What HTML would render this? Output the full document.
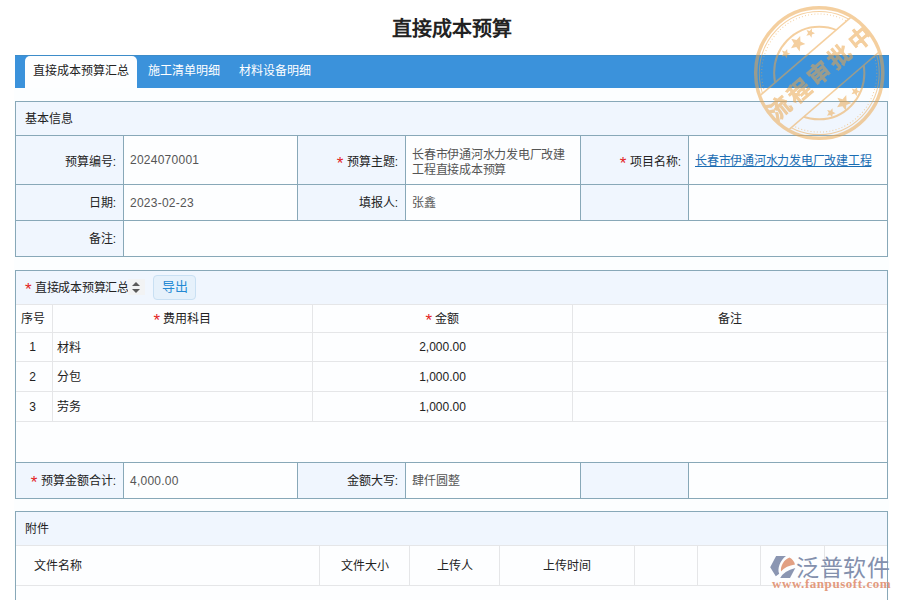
<!DOCTYPE html>
<html lang="zh-CN">
<head>
<meta charset="utf-8">
<title>直接成本预算</title>
<style>
*{box-sizing:border-box;margin:0;padding:0}
html,body{width:900px;height:600px;overflow:hidden;background:#fff}
body{position:relative;font-family:"Liberation Sans",sans-serif;font-size:12px;color:#222}
.title{position:absolute;left:15px;top:0;width:873px;height:55px;line-height:58px;text-align:center;font-size:20px;font-weight:bold;color:#222;white-space:nowrap}
.tabs{position:absolute;left:15px;top:55px;width:874px;height:33px;background:#3b92db;border-top:1px solid #3d8cc9;padding-left:10px;white-space:nowrap;overflow:hidden}
.tab{display:inline-block;vertical-align:top;height:32px;line-height:31px;padding:0 8px;margin-right:3px;color:#fff;font-size:12px;text-align:center}
.tab.on{width:112px;padding:0;background:#fdfeff;color:#222;border-radius:5px 5px 0 0}
.panel{position:absolute;left:15px;width:873px;border:1px solid #88a8b8;background:#fdfeff;overflow:hidden}
.phead{position:relative;height:34px;line-height:34px;padding-left:9px;background:#f0f6fe;border-bottom:1px solid #88a8b8;white-space:nowrap;overflow:hidden}
.phead.soft{border-bottom-color:#e5e6e8}
table{border-collapse:separate;border-spacing:0;table-layout:fixed;width:871px}
table.form td{border-right:1px solid #88a8b8;border-bottom:1px solid #88a8b8;vertical-align:middle;overflow:hidden;white-space:nowrap;line-height:14px}
table.form td.l{background:#f0f6fe;text-align:right;padding-right:7px;color:#222}
table.form td.v{background:#fdfeff;padding-left:6px;color:#555}
table.form td:last-child{border-right:0}
table.form tr.last td{border-bottom:0}
table.form.top{border-top:1px solid #88a8b8}
.req{color:#e3241f;font-family:"Liberation Sans",sans-serif;font-size:17px;line-height:0;position:relative;top:3px}
table.form tr.r1 td.l{padding-top:3px}
table.form tr.r1 td.v{padding-top:1px}
table.form tr.r1 td.v.num{padding-top:0}
table.form tr.r1 td.v.two{line-height:15px;padding-top:5px}
table.form td.num{letter-spacing:.25px}
table.form td.cjk{letter-spacing:-.25px}
a{color:#1b6db3;text-decoration:underline}
table.grid td,table.grid th{border-right:1px solid #e5e6e8;border-bottom:1px solid #e5e6e8;font-weight:normal;color:#222;vertical-align:middle;white-space:nowrap;overflow:hidden;background:#fdfeff}
table.grid td:last-child,table.grid th:last-child{border-right:0}
table.grid .c{text-align:center}
table.grid td.t{padding-left:4px;padding-bottom:2px}
table.grid th{padding-bottom:2px}
table.grid .n{padding-right:3px}
.btn{position:absolute;left:137px;top:4px;width:43px;height:25px;line-height:22px;text-align:center;border:1px solid #c9e0f3;border-radius:4px;background:#e6f1fb;color:#2489d3;font-size:13px}
.sort{position:absolute;left:112px;top:8px;width:17px;height:16px;background:#f2f3f4}
.sort:before,.sort:after{content:"";position:absolute;left:4px;border-left:4px solid transparent;border-right:4px solid transparent}
.sort:before{top:3px;border-bottom:4px solid #5a5a5a}
.sort:after{top:10px;border-top:4px solid #5a5a5a}
.stamp{position:absolute;left:750.35px;top:2.15px;width:138.5px;height:142.1px;pointer-events:none}
.logo{position:absolute;left:768px;top:553px;width:124px;height:40px;pointer-events:none;white-space:nowrap}
.logo .cn{position:absolute;left:28px;top:2px;font-size:23px;line-height:26px;letter-spacing:.7px;color:#8390ad;font-weight:500}
.logo .url{position:absolute;left:4px;top:25px;font-family:"Liberation Serif",serif;font-weight:bold;font-size:13px;line-height:12px;letter-spacing:.55px;color:#e39a7e}
</style>
</head>
<body>
<div style="position:absolute;left:14px;top:88px;width:875px;height:512px;background:#fcfeff"></div>
<div class="title">直接成本预算</div>

<div class="tabs"><span class="tab on">直接成本预算汇总</span><span class="tab">施工清单明细</span><span class="tab">材料设备明细</span></div>

<div class="panel" style="top:101px;height:156px">
  <div class="phead">基本信息</div>
  <table class="form">
    <colgroup><col style="width:108px"><col style="width:174px"><col style="width:108px"><col style="width:175px"><col style="width:108px"><col style="width:198px"></colgroup>
    <tr class="r1" style="height:49px">
      <td class="l">预算编号:</td><td class="v num">2024070001</td>
      <td class="l"><span class="req">*</span> 预算主题:</td><td class="v two cjk">长春市伊通河水力发电厂改建<br>工程直接成本预算</td>
      <td class="l"><span class="req">*</span> 项目名称:</td><td class="v cjk"><a>长春市伊通河水力发电厂改建工程</a></td>
    </tr>
    <tr style="height:36px">
      <td class="l">日期:</td><td class="v num">2023-02-23</td>
      <td class="l">填报人:</td><td class="v">张鑫</td>
      <td class="l"></td><td class="v"></td>
    </tr>
    <tr class="last" style="height:35px">
      <td class="l">备注:</td><td class="v" colspan="5"></td>
    </tr>
  </table>
</div>

<div class="panel" style="top:270px;height:229px">
  <div class="phead soft"><span class="req">*</span> <span style="letter-spacing:-.25px">直接成本预算汇总</span><span class="sort"></span><span class="btn">导出</span></div>
  <table class="grid">
    <colgroup><col style="width:37px"><col style="width:260px"><col style="width:260px"><col style="width:314px"></colgroup>
    <tr style="height:28px"><th class="c n">序号</th><th class="c"><span class="req">*</span> 费用科目</th><th class="c"><span class="req">*</span> 金额</th><th class="c">备注</th></tr>
    <tr style="height:29px"><td class="c n">1</td><td class="t">材料</td><td class="c">2,000.00</td><td></td></tr>
    <tr style="height:30px"><td class="c n">2</td><td class="t">分包</td><td class="c">1,000.00</td><td></td></tr>
    <tr style="height:30px"><td class="c n">3</td><td class="t">劳务</td><td class="c">1,000.00</td><td></td></tr>
  </table>
  <div style="height:40px"></div>
  <table class="form top">
    <colgroup><col style="width:108px"><col style="width:174px"><col style="width:108px"><col style="width:175px"><col style="width:108px"><col style="width:198px"></colgroup>
    <tr class="last" style="height:35px">
      <td class="l"><span class="req">*</span> 预算金额合计:</td><td class="v num">4,000.00</td>
      <td class="l">金额大写:</td><td class="v">肆仟圆整</td>
      <td class="l"></td><td class="v"></td>
    </tr>
  </table>
</div>

<div class="panel" style="top:511px;height:100px">
  <div class="phead soft">附件</div>
  <table class="grid">
    <colgroup><col style="width:304px"><col style="width:90px"><col style="width:90px"><col style="width:135px"><col style="width:63px"><col style="width:63px"><col style="width:64px"><col style="width:62px"></colgroup>
    <tr style="height:40px"><th style="text-align:left;padding-left:18px">文件名称</th><th class="c">文件大小</th><th class="c">上传人</th><th class="c">上传时间</th><th></th><th></th><th></th><th></th></tr>
    <tr style="height:20px"><td colspan="8" style="border-bottom:0"></td></tr>
  </table>
</div>

<svg class="stamp" viewBox="-70 -70 140 140" preserveAspectRatio="none">
  <defs>
    <mask id="bandcut" maskUnits="userSpaceOnUse" x="-70" y="-70" width="140" height="140">
      <rect x="-70" y="-70" width="140" height="140" fill="#fff"/>
      <rect x="-80" y="-21.5" width="160" height="44.5" fill="#000" transform="rotate(-40)"/>
    </mask>
    <clipPath id="disc"><circle r="63"/></clipPath>
  </defs>
  <g opacity=".53" fill="none" stroke="#eca64c">
    <circle r="64.25" stroke-width="3.5"/>
    <g mask="url(#bandcut)">
      <circle r="60.6" stroke-width="1"/>
      <circle r="58.2" stroke-width="1" stroke-dasharray="1 2.2"/>
      <circle r="45.6" stroke-width="2"/>
    </g>
    <g transform="rotate(-40)" clip-path="url(#disc)">
      <line x1="-70" y1="-21.5" x2="70" y2="-21.5" stroke-width="1.6"/>
      <line x1="-70" y1="23" x2="70" y2="23" stroke-width="1.6"/>
    </g>
    <g fill="#eca64c" stroke="none">
      <path d="M-19.3,-36.5L-19.0,-31.0L-14.0,-28.7L-19.2,-26.8L-19.8,-21.3L-23.2,-25.6L-28.6,-24.5L-25.6,-29.1L-28.3,-33.9L-23.0,-32.5Z"/>
      <path d="M-7.5,-43.9L-7.3,-40.6L-4.3,-39.2L-7.4,-38.1L-7.8,-34.8L-9.8,-37.4L-13.1,-36.7L-11.3,-39.5L-12.9,-42.4L-9.7,-41.5Z"/>
      <path d="M-32.4,-23.6L-32.2,-20.3L-29.2,-18.9L-32.3,-17.8L-32.7,-14.5L-34.7,-17.1L-38.0,-16.4L-36.2,-19.2L-37.8,-22.1L-34.6,-21.2Z"/>
      <path d="M27.3,21.7L27.6,27.2L32.6,29.5L27.4,31.4L26.8,36.9L23.4,32.6L18.0,33.7L21.0,29.1L18.3,24.3L23.6,25.7Z"/>
      <path d="M38.2,13.7L38.4,17.0L41.4,18.4L38.3,19.5L37.9,22.8L35.9,20.2L32.6,20.9L34.4,18.1L32.8,15.2L36.0,16.1Z"/>
      <path d="M13.4,34.8L13.6,38.1L16.6,39.5L13.5,40.6L13.1,43.9L11.1,41.3L7.8,42.0L9.6,39.2L8.0,36.3L11.2,37.2Z"/>
      <text transform="rotate(-40)" x="2" y="8.6" text-anchor="middle" font-family="'Liberation Sans',sans-serif" font-weight="bold" font-size="22.5" letter-spacing="3.8" stroke="#eca64c" stroke-width=".6">流程审批中</text>
    </g>
  </g>
</svg>

<div class="logo">
  <svg width="27" height="23" viewBox="0 0 27 23" style="position:absolute;left:2px;top:3px">
    <path d="M0.2,11.2 L6.1,0.1 L16,0.1 C10,4.5 7,13 9.2,17.8 L5.8,20.3 Z" fill="#8b96b2"/>
    <path d="M19.5,1.6 Q23.8,4 25,8.6 Q16,9.8 11,15.6 C10.2,10 14,3.6 19.5,1.6 Z" fill="#e2a083"/>
    <path d="M25.3,12.1 L20,22 L10.2,22 Q14,15 25.3,12.1 Z" fill="#8b96b2"/>
  </svg>
  <span class="cn">泛普软件</span>
  <span class="url">www.fanpusoft.com</span>
</div>
</body>
</html>
